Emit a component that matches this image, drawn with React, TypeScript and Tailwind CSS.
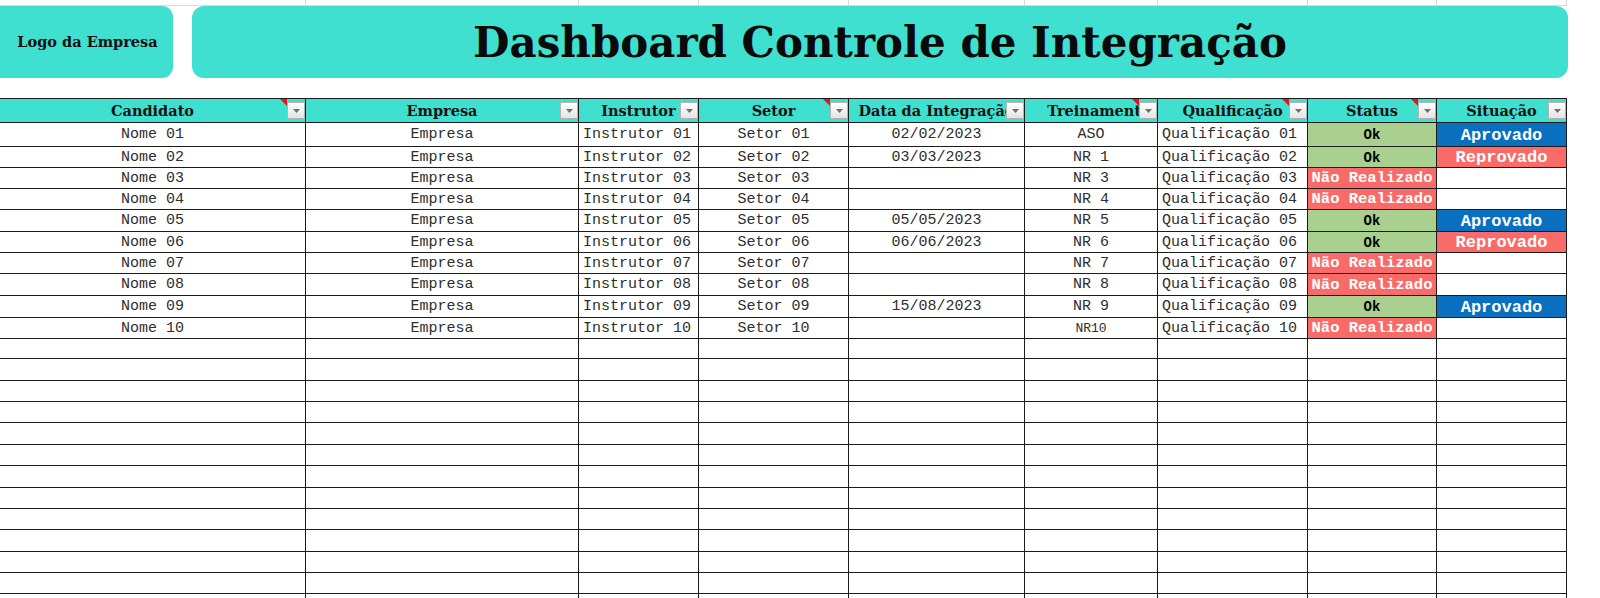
import React from "react";

const colW = [
  "w-[306px]",
  "w-[273px]",
  "w-[120px]",
  "w-[150px]",
  "w-[176px]",
  "w-[133px]",
  "w-[150px]",
  "w-[129px]",
  "w-[130px]",
];

type Head = { label: string; comment: boolean; extra: string };
const heads: Head[] = [
  { label: "Candidato", comment: true, extra: "" },
  { label: "Empresa", comment: false, extra: "" },
  { label: "Instrutor", comment: false, extra: "" },
  { label: "Setor", comment: true, extra: "" },
  { label: "Data da Integração", comment: false, extra: "" },
  { label: "Treinamento", comment: true, extra: "pl-[16px]" },
  { label: "Qualificação", comment: true, extra: "" },
  { label: "Status", comment: true, extra: "" },
  { label: "Situação", comment: false, extra: "" },
];

type Row = {
  nome: string;
  instr: string;
  setor: string;
  data: string;
  trein: string;
  qual: string;
  status: "" | "Ok" | "Não Realizado";
  sit: "" | "Aprovado" | "Reprovado";
};

const rows: Row[] = [
  { nome: "Nome 01", instr: "Instrutor 01", setor: "Setor 01", data: "02/02/2023", trein: "ASO", qual: "Qualificação 01", status: "Ok", sit: "Aprovado" },
  { nome: "Nome 02", instr: "Instrutor 02", setor: "Setor 02", data: "03/03/2023", trein: "NR 1", qual: "Qualificação 02", status: "Ok", sit: "Reprovado" },
  { nome: "Nome 03", instr: "Instrutor 03", setor: "Setor 03", data: "", trein: "NR 3", qual: "Qualificação 03", status: "Não Realizado", sit: "" },
  { nome: "Nome 04", instr: "Instrutor 04", setor: "Setor 04", data: "", trein: "NR 4", qual: "Qualificação 04", status: "Não Realizado", sit: "" },
  { nome: "Nome 05", instr: "Instrutor 05", setor: "Setor 05", data: "05/05/2023", trein: "NR 5", qual: "Qualificação 05", status: "Ok", sit: "Aprovado" },
  { nome: "Nome 06", instr: "Instrutor 06", setor: "Setor 06", data: "06/06/2023", trein: "NR 6", qual: "Qualificação 06", status: "Ok", sit: "Reprovado" },
  { nome: "Nome 07", instr: "Instrutor 07", setor: "Setor 07", data: "", trein: "NR 7", qual: "Qualificação 07", status: "Não Realizado", sit: "" },
  { nome: "Nome 08", instr: "Instrutor 08", setor: "Setor 08", data: "", trein: "NR 8", qual: "Qualificação 08", status: "Não Realizado", sit: "" },
  { nome: "Nome 09", instr: "Instrutor 09", setor: "Setor 09", data: "15/08/2023", trein: "NR 9", qual: "Qualificação 09", status: "Ok", sit: "Aprovado" },
  { nome: "Nome 10", instr: "Instrutor 10", setor: "Setor 10", data: "", trein: "NR10", qual: "Qualificação 10", status: "Não Realizado", sit: "" },
];

const dataH = [
  "h-[24px]", "h-[21px]", "h-[21px]", "h-[21px]", "h-[22px]",
  "h-[21px]", "h-[21px]", "h-[22px]", "h-[22px]", "h-[21px]",
];
const emptyH = [
  "h-[20px]", "h-[22px]", "h-[21px]", "h-[21px]", "h-[22px]", "h-[21px]",
  "h-[22px]", "h-[21px]", "h-[21px]", "h-[22px]", "h-[21px]", "h-[21px]", "h-[21px]",
];

const serif = "font-['DejaVu_Serif',serif]";
const mono = "font-['Liberation_Mono',monospace]";

function FilterButton() {
  return (
    <div className="absolute right-0 top-[3px] w-[18px] h-[17px] border border-[#b4b4b4] bg-linear-to-b from-white to-[#e4e4e4] flex items-center justify-center">
      <svg width="7" height="4" viewBox="0 0 7 4">
        <path d="M0 0 L7 0 L3.5 4 Z" fill="#6f6f6f" />
      </svg>
    </div>
  );
}

function Cell({
  i,
  className = "",
  children,
}: {
  i: number;
  className?: string;
  children?: React.ReactNode;
}) {
  return (
    <div
      className={`${colW[i]} shrink-0 h-full border-r border-[#1c1c1c] flex items-center pt-[2px] overflow-hidden whitespace-nowrap ${className}`}
    >
      {children}
    </div>
  );
}

function StatusCell({ v }: { v: Row["status"] }) {
  if (v === "Ok")
    return (
      <Cell i={7} className="justify-center bg-[#a9d08e] font-bold text-[14px] text-black">
        Ok
      </Cell>
    );
  if (v === "Não Realizado")
    return (
      <Cell i={7} className="justify-center bg-[#f96b68] font-bold text-[15.5px] text-white">
        Não Realizado
      </Cell>
    );
  return <Cell i={7} />;
}

function SitCell({ v }: { v: Row["sit"] }) {
  if (v === "Aprovado")
    return (
      <Cell i={8} className="justify-center bg-[#0b6fc0] font-bold text-[17px] text-white">
        Aprovado
      </Cell>
    );
  if (v === "Reprovado")
    return (
      <Cell i={8} className="justify-center bg-[#f96b68] font-bold text-[17px] text-white">
        Reprovado
      </Cell>
    );
  return <Cell i={8} />;
}

export default function App() {
  return (
    <div className="w-[1600px] h-[598px] overflow-hidden bg-white">
      {/* top gridline strip */}
      <div className="flex w-[1567px] h-[6px] border-b border-[#dadada]">
        {colW.map((w, i) => (
          <div key={i} className={`${w} shrink-0 h-full border-r border-[#dadada]`} />
        ))}
      </div>

      {/* banner */}
      <div className="flex h-[72px] gap-[19px]">
        <div className="w-[173px] shrink-0 rounded-r-[11px] bg-[#40e0d0] flex items-center justify-center">
          <span className={`${serif} font-bold text-[14.5px] text-[#111] pl-[2px]`}>Logo da Empresa</span>
        </div>
        <div className="w-[1376px] shrink-0 rounded-[12px] bg-[#40e0d0] flex items-center justify-center">
          <span className={`${serif} font-bold text-[42px] leading-none text-[#0a0a0a] pt-[2px]`}>
            Dashboard Controle de Integração
          </span>
        </div>
      </div>

      {/* table */}
      <div className="mt-[20px] w-[1567px]">
        <div className="flex h-[25px] border-y border-[#1c1c1c] bg-[#40e0d0]">
          {heads.map((h, i) => (
            <div
              key={i}
              className={`${colW[i]} shrink-0 h-full relative border-r border-[#1c1c1c] flex items-center justify-center pt-[1px] overflow-hidden whitespace-nowrap ${h.extra}`}
            >
              <span className={`${serif} font-bold text-[14.5px] text-[#111]`}>{h.label}</span>
              {h.comment && (
                <div className="absolute top-0 right-[18px] w-0 h-0 border-t-[7px] border-t-[#e8131b] border-l-[7px] border-l-transparent" />
              )}
              <FilterButton />
            </div>
          ))}
        </div>

        {rows.map((r, k) => (
          <div
            key={k}
            className={`flex ${dataH[k]} border-b border-[#1c1c1c] ${mono} text-[15px] text-[#2e2e2e]`}
          >
            <Cell i={0} className="justify-center">{r.nome}</Cell>
            <Cell i={1} className="justify-center">Empresa</Cell>
            <Cell i={2} className="pl-[4px]">{r.instr}</Cell>
            <Cell i={3} className="justify-center">{r.setor}</Cell>
            <Cell i={4} className="justify-center">{r.data}</Cell>
            <Cell i={5} className={`justify-center ${r.trein === "NR10" ? "text-[13px]" : ""}`}>
              {r.trein}
            </Cell>
            <Cell i={6} className="pl-[4px]">{r.qual}</Cell>
            <StatusCell v={r.status} />
            <SitCell v={r.sit} />
          </div>
        ))}

        {emptyH.map((h, k) => (
          <div key={k} className={`flex ${h} border-b border-[#1c1c1c]`}>
            {colW.map((w, i) => (
              <div key={i} className={`${w} shrink-0 h-full border-r border-[#1c1c1c]`} />
            ))}
          </div>
        ))}
      </div>
    </div>
  );
}
